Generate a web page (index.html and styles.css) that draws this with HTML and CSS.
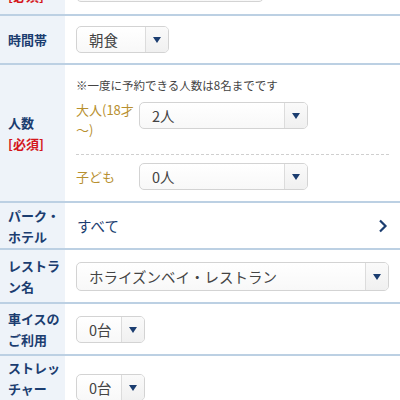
FILE: index.html
```html
<!DOCTYPE html>
<html lang="ja">
<head>
    <meta charset="UTF-8">
    <meta name="viewport" content="width=device-width, initial-scale=1.0">
    <title>レストラン予約</title>
    <link rel="stylesheet" href="styles.css">
</head>
<body>
    <div class="form">
        <div class="row row-date">
            <div class="row-label"><span>利用日<br><span class="req">[必須]</span></span></div>
            <div class="row-value">
                <div class="input w-date"></div>
            </div>
        </div>

        <div class="row row-time">
            <div class="row-label"><span>時間帯</span></div>
            <div class="row-value">
                <div class="select w-time">
                    <span class="select-text">朝食</span>
                    <span class="select-arrow"><i></i></span>
                </div>
            </div>
        </div>

        <div class="row">
            <div class="row-label"><span>人数<br><span class="req">[必須]</span></span></div>
            <div class="row-value people">
                <p class="note">※一度に予約できる人数は8名までです</p>
                <div class="person adult">
                    <div class="person-label">大人(18才<br>〜)</div>
                    <div class="select w-person">
                        <span class="select-text">2人</span>
                        <span class="select-arrow"><i></i></span>
                    </div>
                </div>
                <div class="person child">
                    <div class="person-label">子ども</div>
                    <div class="select w-person">
                        <span class="select-text">0人</span>
                        <span class="select-arrow"><i></i></span>
                    </div>
                </div>
            </div>
        </div>

        <div class="row row-park">
            <div class="row-label"><span>パーク・ホテル</span></div>
            <div class="row-value link">
                <span>すべて</span>
                <svg class="chevron" width="10" height="14" viewBox="0 0 10 14">
                    <path d="M2 1.5 L7.5 7 L2 12.5" fill="none" stroke="#1b3d70" stroke-width="2.2"/>
                </svg>
            </div>
        </div>

        <div class="row row-rest">
            <div class="row-label"><span>レストラン名</span></div>
            <div class="row-value">
                <div class="select w-full tall">
                    <span class="select-text">ホライズンベイ・レストラン</span>
                    <span class="select-arrow"><i></i></span>
                </div>
            </div>
        </div>

        <div class="row row-chair">
            <div class="row-label"><span>車イスのご利用</span></div>
            <div class="row-value">
                <div class="select w-count">
                    <span class="select-text">0台</span>
                    <span class="select-arrow"><i></i></span>
                </div>
            </div>
        </div>

        <div class="row row-stretcher">
            <div class="row-label"><span>ストレッチャー</span></div>
            <div class="row-value">
                <div class="select w-count">
                    <span class="select-text">0台</span>
                    <span class="select-arrow"><i></i></span>
                </div>
            </div>
        </div>
    </div>
</body>
</html>
```

FILE: styles.css
```css
body {
    margin: 0;
    font-family: "Noto Sans CJK JP", "Noto Sans", sans-serif;
    color: #333;
    background: #fff;
}
.form {
    margin-top: -37px;
}
.row {
    display: flex;
    border-bottom: 2px solid #bcd0e3;
}
.row-label {
    width: 65px;
    flex-shrink: 0;
    box-sizing: border-box;
    padding: 0 3px 0 8px;
    background: #eef3f9;
    display: flex;
    align-items: center;
    font-size: 13px;
    line-height: 21px;
    font-weight: bold;
    color: #1b3d70;
}
.req {
    color: #d4161c;
}
.row-value {
    flex: 1;
    display: flex;
    align-items: center;
    padding: 0 11px;
}
.row-date { min-height: 51px; }
.row-date .row-label { padding-bottom: 8px; }
.row-time { min-height: 47px; }
.row-park { min-height: 45px; }
.row-rest { min-height: 52px; }
.row-chair { min-height: 50px; }
.row-stretcher {
    min-height: 64px;
    align-items: flex-start;
}
.row-stretcher .row-label {
    align-self: stretch;
    align-items: flex-start;
    padding-top: 1px;
}
.row-stretcher .row-value {
    padding-top: 18px;
}

.input,
.select {
    box-sizing: border-box;
    height: 27px;
    border: 1px solid #d3d3d3;
    border-radius: 5px;
    background: linear-gradient(#fff, #f8f8f8);
}
.select {
    display: flex;
    font-size: 14.5px;
    color: #444;
}
.select.tall {
    height: 29px;
}
.select-text {
    flex: 1;
    display: flex;
    align-items: center;
    padding-left: 12px;
    white-space: nowrap;
    overflow: hidden;
}
.select-arrow {
    width: 22px;
    border-left: 1px solid #dcdcdc;
    display: flex;
    align-items: center;
    justify-content: center;
    background: linear-gradient(#fafafa, #f0f0f0);
    border-radius: 0 4px 4px 0;
}
.select-arrow i {
    width: 0;
    height: 0;
    border-left: 4px solid transparent;
    border-right: 4px solid transparent;
    border-top: 6px solid #1b3d70;
    margin-top: 1px;
}
.w-date { width: 188px; }
.w-time { width: 93px; }
.w-person { width: 169px; }
.w-full { width: 100%; }
.w-count { width: 69px; }

.people {
    flex-direction: column;
    align-items: stretch;
    padding-top: 12px;
    padding-bottom: 11px;
}
.note {
    margin: 0 0 9px;
    font-size: 11.5px;
    line-height: 16px;
    color: #444;
}
.person {
    display: flex;
}
.person-label {
    width: 63px;
    flex-shrink: 0;
    font-size: 13px;
    line-height: 20px;
    color: #b8902f;
    white-space: nowrap;
}
.adult {
    align-items: flex-start;
    padding-bottom: 12px;
    border-bottom: 1px dashed #cfcfcf;
}
.adult .person-label {
    margin-top: -2px;
    margin-bottom: 2px;
}
.child {
    align-items: center;
    padding-top: 8px;
}

.link {
    justify-content: space-between;
    font-size: 14.5px;
    color: #1b3d70;
    padding-left: 12px;
}
.chevron {
    margin-right: 1px;
}
```
